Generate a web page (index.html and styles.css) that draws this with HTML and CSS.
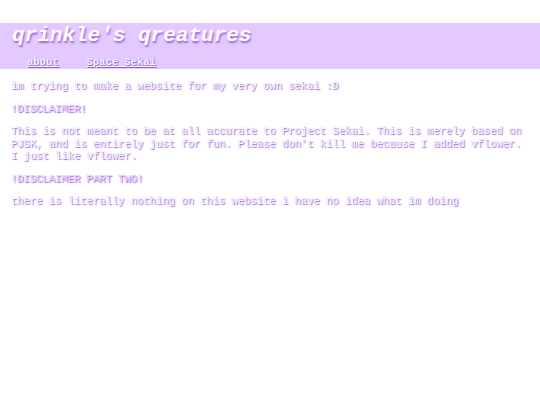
FILE: index.html
```html
<!DOCTYPE html>
<html>
<head>
<meta charset="utf-8">
<link rel="stylesheet" href="styles.css">
</head>
<body>
<header class="banner">
  <h1 class="title">qrinkle's qreatures</h1>
  <nav class="nav">
    <a href="#">about</a>
    <a href="#">Space Sekai</a>
  </nav>
</header>
<main class="content">
  <p>im trying to make a website for my very own sekai :D</p>
  <p class="warn">!DISCLAIMER!</p>
  <p>This is not meant to be at all accurate to Project Sekai. This is merely based on PJSK, and is entirely just for fun. Please don't kill me because I added vflower. I just like vflower.</p>
  <p class="warn">!DISCLAIMER PART TWO!</p>
  <p>there is literally nothing on this website i have no idea what im doing</p>
</main>
</body>
</html>
```

FILE: styles.css
```css
html, body {
  margin: 0;
  padding: 0;
  background: #ffffff;
}
body {
  font-family: "Liberation Mono", "Courier New", monospace;
  font-weight: normal;
  font-size: 10.5px;
  color: #ffffff;
  text-shadow: 1px 1px 1px #9560d4, 0 0 1px #c9a6f0;
  padding-top: 23px;
}
.banner {
  background: #e3c9ff;
  padding: 0 12px;
  height: 46px;
}
.title {
  margin: 0;
  font-size: 21px;
  font-style: italic;
  font-weight: bold;
  line-height: 24px;
  padding-top: 1px;
  text-shadow: 1px 2px 2px #9a62d8;
}
.nav {
  display: flex;
  gap: 28px;
  padding-left: 15px;
  padding-top: 8px;
  line-height: 12px;
  font-weight: bold;
}
.nav a {
  color: #eef6ff;
  text-decoration: underline;
}
.content {
  padding: 0 11px;
}
.content p {
  margin: 10px 0;
  line-height: 12.5px;
}
.content p:first-child {
  margin-top: 11px;
}
.warn {
  color: #f0d8ff;
}
```
